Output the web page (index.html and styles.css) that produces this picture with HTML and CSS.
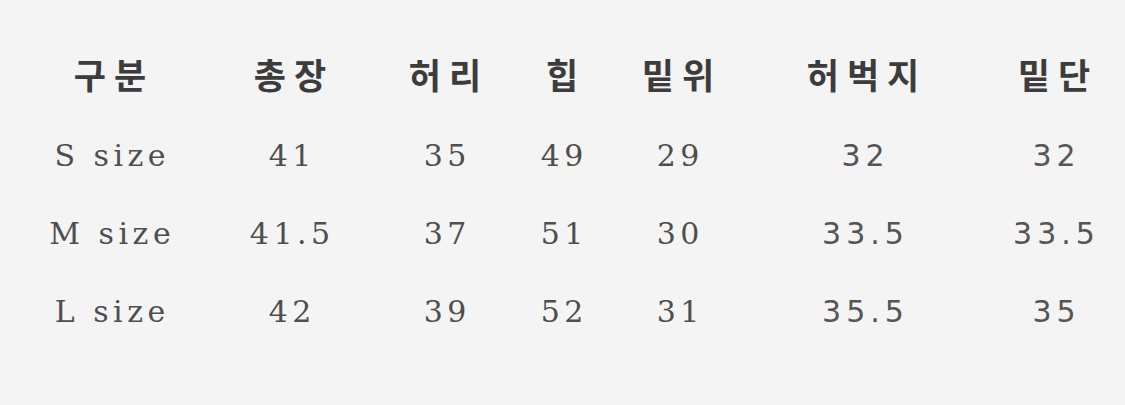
FILE: index.html
```html
<!DOCTYPE html>
<html lang="ko">
<head>
<meta charset="utf-8">
<title>사이즈</title>
<link rel="stylesheet" href="styles.css">
</head>
<body>
<div class="sheet">
  <div class="size-table">
    <div class="cell head">구분</div>
    <div class="cell head">총장</div>
    <div class="cell head">허리</div>
    <div class="cell head">힙</div>
    <div class="cell head">밑위</div>
    <div class="cell head">허벅지</div>
    <div class="cell head">밑단</div>

    <div class="cell serif">S size</div>
    <div class="cell serif">41</div>
    <div class="cell serif">35</div>
    <div class="cell serif">49</div>
    <div class="cell serif">29</div>
    <div class="cell sans">32</div>
    <div class="cell sans">32</div>

    <div class="cell serif">M size</div>
    <div class="cell serif">41.5</div>
    <div class="cell serif">37</div>
    <div class="cell serif">51</div>
    <div class="cell serif">30</div>
    <div class="cell sans">33.5</div>
    <div class="cell sans">33.5</div>

    <div class="cell serif">L size</div>
    <div class="cell serif">42</div>
    <div class="cell serif">39</div>
    <div class="cell serif">52</div>
    <div class="cell serif">31</div>
    <div class="cell sans">35.5</div>
    <div class="cell sans">35</div>
  </div>
</div>
</body>
</html>
```
FILE: styles.css
```css
html, body {
  margin: 0;
  padding: 0;
  background: #f4f4f4;
}
body {
  width: 1125px;
  height: 405px;
  overflow: hidden;
}
.sheet {
  padding: 30px 0 0 20px;
}
.size-table {
  display: grid;
  grid-template-columns: 180px 180px 130px 104px 128px 242px 140px;
  grid-template-rows: 86px 78px 78px 78px;
}
.cell {
  display: flex;
  align-items: center;
  justify-content: center;
  white-space: nowrap;
}
.head {
  font-family: "Noto Sans CJK KR", "Noto Sans", sans-serif;
  font-weight: 700;
  font-size: 35px;
  letter-spacing: 8px;
  padding-left: 8px;
  color: #3c3c3c;
}
.serif {
  font-family: "DejaVu Serif", "Liberation Serif", serif;
  font-size: 30px;
  letter-spacing: 4.5px;
  padding-left: 4.5px;
  color: #4e4e4e;
}
.sans {
  font-family: "DejaVu Sans", "Liberation Sans", sans-serif;
  font-size: 30px;
  letter-spacing: 5px;
  padding-left: 5px;
  color: #555555;
}
```
